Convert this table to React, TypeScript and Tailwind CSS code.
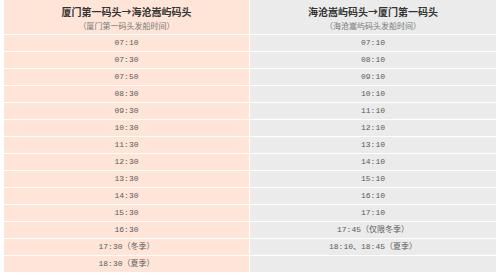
import { Fragment } from "react";

const toHaicang = [
  "07:10",
  "07:30",
  "07:50",
  "08:30",
  "09:30",
  "10:30",
  "11:30",
  "12:30",
  "13:30",
  "14:30",
  "15:30",
  "16:30",
  "17:30（冬季）",
  "18:30（夏季）",
];

const toXiamen = [
  "07:10",
  "08:10",
  "09:10",
  "10:10",
  "11:10",
  "12:10",
  "13:10",
  "14:10",
  "15:10",
  "16:10",
  "17:10",
  "17:45（仅限冬季）",
  "18:10、18:45（夏季）",
  "",
];

function Header({ title, note, tone }: { title: string; note: string; tone: string }) {
  return (
    <div className={`flex h-[34px] flex-col items-center pt-[5px] font-['Noto_Sans_CJK_SC',sans-serif] ${tone}`}>
      <span className="text-[10px] font-bold leading-[14px] text-[#333]">{title}</span>
      <span className="mt-px text-[8px] leading-[12px] text-[#777]">{note}</span>
    </div>
  );
}

export default function App() {
  return (
    <div className="h-[275px] w-[500px] bg-white pl-[4px]">
      <div className="grid w-[492px] grid-cols-[245px_246px] gap-px bg-white">
        <Header title="厦门第一码头→海沧嵩屿码头" note="（厦门第一码头发船时间）" tone="bg-[#fee5d8]" />
        <Header title="海沧嵩屿码头→厦门第一码头" note="（海沧嵩屿码头发船时间）" tone="bg-[#ebebeb]" />

        {toHaicang.map((t, i) => (
          <Fragment key={i}>
            <div className="flex h-[16px] items-center justify-center bg-[#fee5d8] font-['Liberation_Mono','Noto_Sans_CJK_SC',monospace] text-[8px] text-[#5a5a5a]">
              {t}
            </div>
            <div className="flex h-[16px] items-center justify-center bg-[#ebebeb] font-['Liberation_Mono','Noto_Sans_CJK_SC',monospace] text-[8px] text-[#5a5a5a]">
              {toXiamen[i]}
            </div>
          </Fragment>
        ))}
      </div>
    </div>
  );
}
